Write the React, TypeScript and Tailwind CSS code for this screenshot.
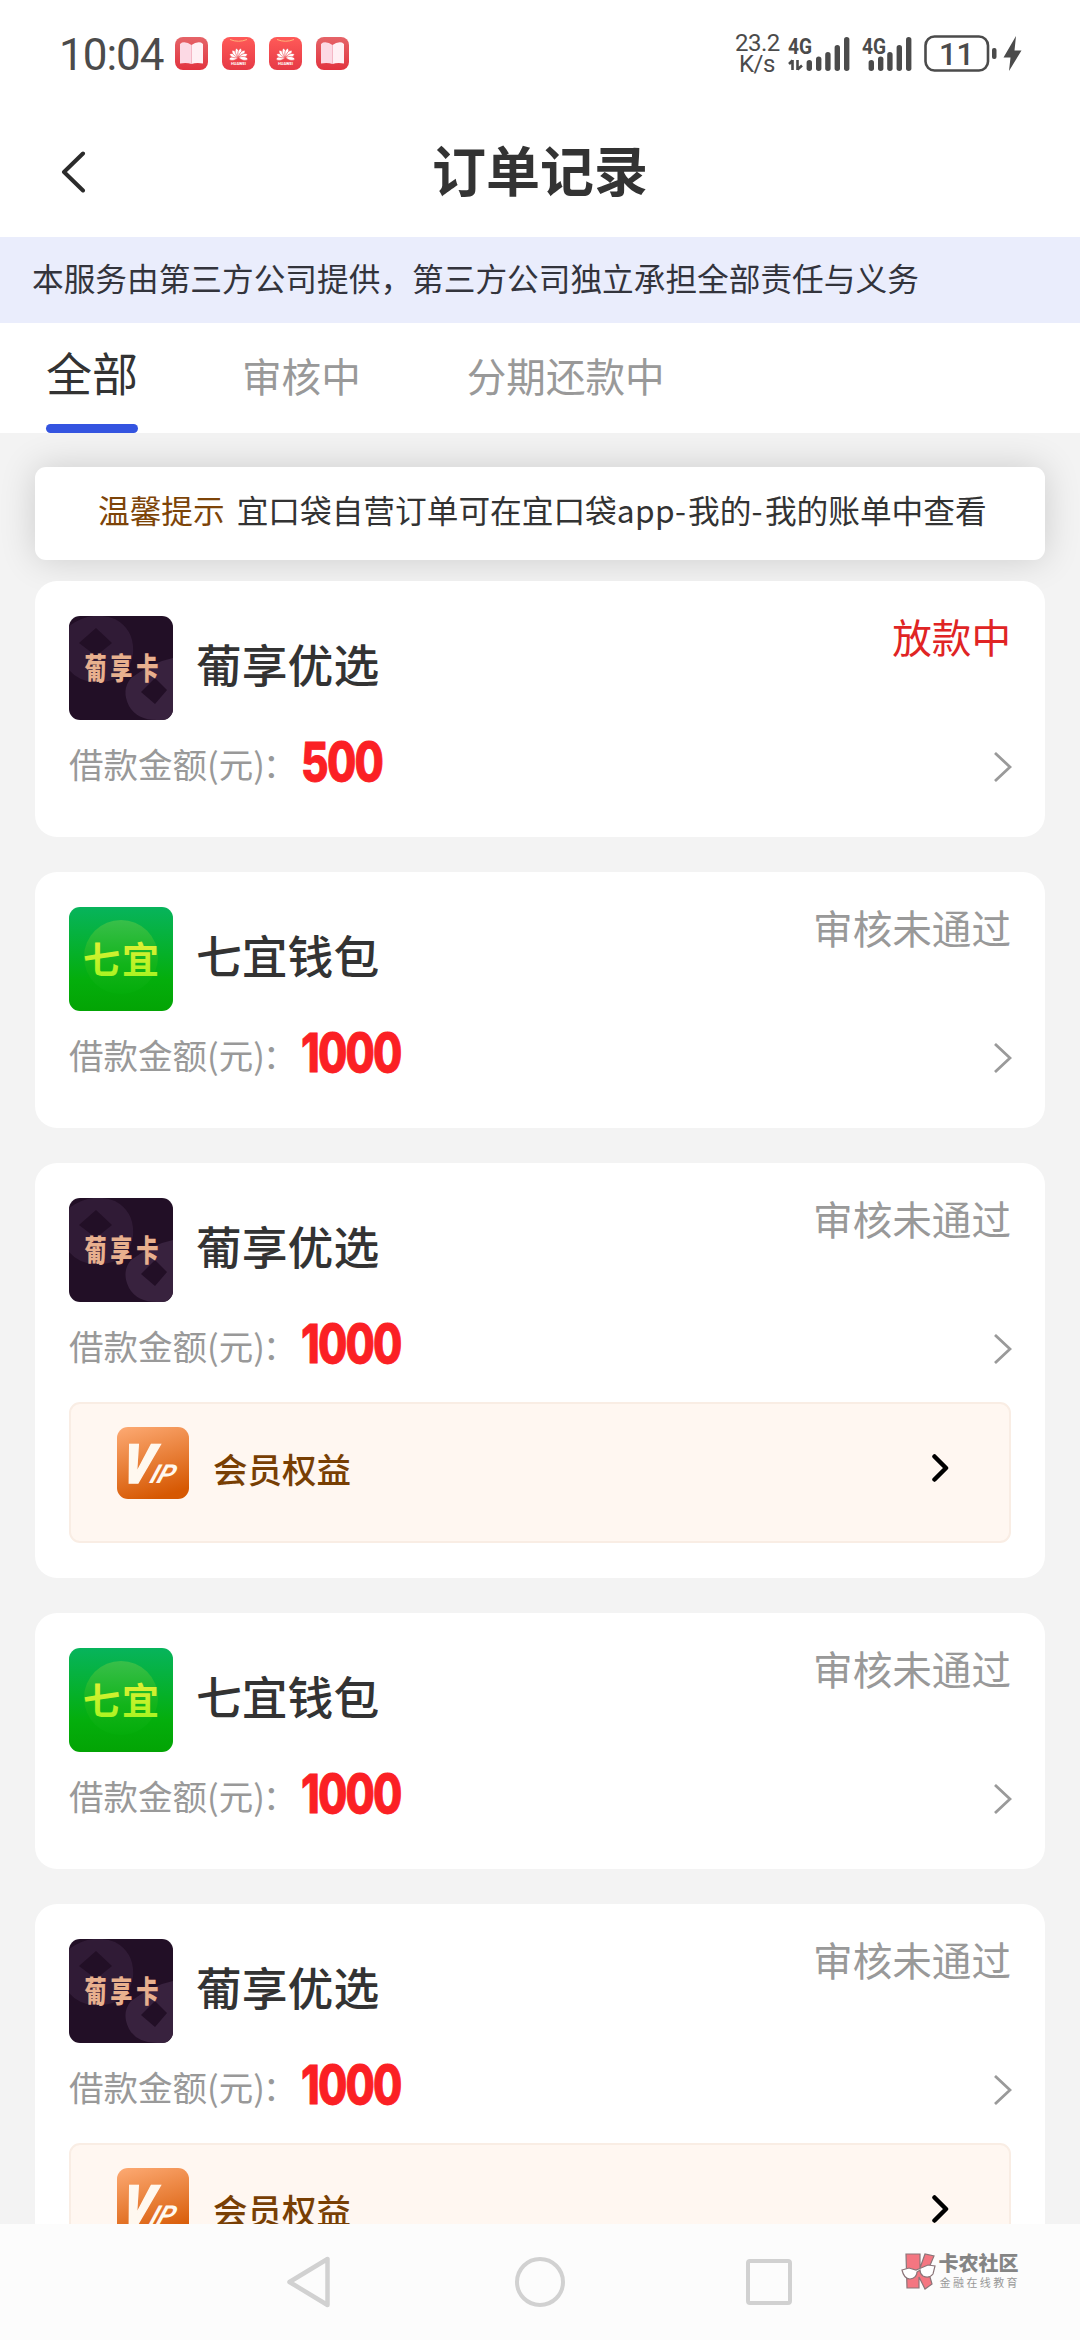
import { clsx } from 'clsx'

type Brand = 'puxiang' | 'qiyi'

interface Order {
  brand: Brand
  name: string
  amount: string
  status: string
  active?: boolean
  vip?: boolean
}

const orders: Order[] = [
  { brand: 'puxiang', name: '葡享优选', amount: '500', status: '放款中', active: true },
  { brand: 'qiyi', name: '七宜钱包', amount: '1000', status: '审核未通过' },
  { brand: 'puxiang', name: '葡享优选', amount: '1000', status: '审核未通过', vip: true },
  { brand: 'qiyi', name: '七宜钱包', amount: '1000', status: '审核未通过' },
  { brand: 'puxiang', name: '葡享优选', amount: '1000', status: '审核未通过', vip: true },
]

function BookIcon() {
  return (
    <svg width="33" height="33" viewBox="0 0 33 33">
      <defs>
        <linearGradient id="book" x1="0" y1="0" x2="0" y2="1">
          <stop offset="0" stopColor="#e56468" />
          <stop offset="1" stopColor="#e2333f" />
        </linearGradient>
      </defs>
      <rect width="33" height="33" rx="8" fill="url(#book)" />
      <path d="M5 7 L7 5.5 Q12 4.5 16.5 8 L16.5 27 Q12 25.5 5 26.5Z" fill="#fcd9e4" />
      <path d="M28 7 L26 5.5 Q21 4.5 16.5 8 L16.5 27 Q21 25.5 28 26.5Z" fill="#fff0f4" />
      <path d="M16.5 8 V27" stroke="#f3b5c4" strokeWidth="0.8" />
    </svg>
  )
}

function HuaweiIcon() {
  return (
    <svg width="33" height="33" viewBox="0 0 33 33">
      <defs>
        <linearGradient id="hw" x1="0" y1="0" x2="0" y2="1">
          <stop offset="0" stopColor="#ff5a58" />
          <stop offset="1" stopColor="#e63a46" />
        </linearGradient>
      </defs>
      <rect width="33" height="33" rx="8" fill="url(#hw)" />
      <path d="M8 2.5 Q16.5 6 25 2.5" fill="none" stroke="#ffb27a" strokeWidth="1" />
      {[-100, -70, -42, -14, 14, 42, 70, 100].map((deg) => (
        <path
          key={deg}
          d="M16.5 20.5 C13.6 16 13.8 11.5 16.5 9.6 C19.2 11.5 19.4 16 16.5 20.5Z"
          fill="#fff"
          stroke="#ee4a50"
          strokeWidth="0.7"
          transform={`rotate(${deg} 16.5 20.5) translate(16.5 20.5) scale(0.88) translate(-16.5 -20.5)`}
        />
      ))}
      <text x="16.5" y="28.4" textAnchor="middle" fontSize="4" fontWeight="700" fill="#fff" fontFamily="Roboto, sans-serif">
        HUAWEI
      </text>
    </svg>
  )
}

function Signal({ data }: { data?: boolean }) {
  return (
    <svg className="overflow-visible" width={data ? 62 : 50} height="36" viewBox={data ? '0 0 62 36' : '12 0 50 36'} fill="#4b4b4b">
      <text x={data ? 0 : 12} y="17.5" fontSize="22" fontWeight="700" textLength="24" lengthAdjust="spacingAndGlyphs" fontFamily="Roboto, sans-serif">
        4G
      </text>
      {data && <path d="M4.5 24 V34 M1 28 L4.5 24.5 M9.5 24 V34 M9.5 33.5 L14 29.5" stroke="#4b4b4b" strokeWidth="2.6" fill="none" />}
      <rect x="18.6" y="24" width="5.4" height="11" rx="2.7" />
      <rect x="28" y="20.5" width="5.4" height="14.5" rx="2.7" />
      <rect x="37.2" y="16" width="5.4" height="19" rx="2.7" />
      <rect x="46.6" y="9" width="5.4" height="26" rx="2.7" />
      <rect x="56" y="1" width="5.4" height="34" rx="2.7" />
    </svg>
  )
}

function StatusBar() {
  return (
    <div className="flex h-[107px] items-center justify-between pr-[56px] pl-[59px] font-[Roboto,sans-serif] text-[#4b4b4b]">
      <div className="flex items-center">
        <span className="w-[116px] pt-[2px] text-[44px] leading-[52px] tracking-[-1px]">10:04</span>
        <div className="flex gap-[14px]">
          <BookIcon />
          <HuaweiIcon />
          <HuaweiIcon />
          <BookIcon />
        </div>
      </div>
      <div className="flex items-center">
        <div className="mt-[1px] w-[44px] text-center text-[24px] leading-[21px] tracking-[-0.5px]">
          <div>23.2</div>
          <div>K/s</div>
        </div>
        <div className="ml-[9px] flex gap-3">
          <Signal data />
          <Signal />
        </div>
        <svg className="ml-3" width="100" height="38" viewBox="0 0 100 38">
          <rect x="1.5" y="1.5" width="62.5" height="34" rx="9" fill="none" stroke="#4b4b4b" strokeWidth="2.6" />
          <rect x="68" y="13" width="4.5" height="11" rx="2" fill="#4b4b4b" />
          <path d="M92 1 L79.5 22.5 H86.5 L85 36 L97.5 15.5 H90.5Z" fill="#4b4b4b" />
          <text x="32.5" y="29.5" textAnchor="middle" fontSize="31" fontWeight="500" fill="#4b4b4b" fontFamily="Roboto, sans-serif">
            11
          </text>
        </svg>
      </div>
    </div>
  )
}

function PuxiangLogo() {
  return (
    <svg width="104" height="104" viewBox="0 0 104 104" className="rounded-[11px]">
      <rect width="104" height="104" fill="#220f26" />
      <path d="M0 10 Q22 -6 46 3 Q66 14 64 38 Q60 64 32 66 Q12 68 0 54Z M27 12 L10 27 L27 40 L43 27Z" fill="#301b36" fillRule="evenodd" />
      <path d="M104 42 Q84 46 62 62 Q52 74 60 90 Q68 104 88 104 H104Z M86 62 L98 74 L86 88 L72 76Z" fill="#38223e" fillRule="evenodd" />
      <g transform="translate(52 62.5) scale(0.74 1)">
        <text x="3" y="0" textAnchor="middle" fontSize="30" fontWeight="900" letterSpacing="5" fill="#e8b08e" fontFamily="'Noto Sans CJK SC', sans-serif">
          葡享卡
        </text>
      </g>
    </svg>
  )
}

function QiyiLogo() {
  return (
    <svg width="104" height="104" viewBox="0 0 104 104" className="rounded-[11px]">
      <defs>
        <linearGradient id="qyBg" x1="0" y1="0" x2="0" y2="1">
          <stop offset="0" stopColor="#07b45c" />
          <stop offset="0.7" stopColor="#04ae0c" />
          <stop offset="1" stopColor="#03a404" />
        </linearGradient>
        <linearGradient id="qyDisc" x1="0" y1="0" x2="0" y2="1">
          <stop offset="0" stopColor="#38bf4a" />
          <stop offset="0.6" stopColor="#12b41a" />
          <stop offset="1" stopColor="#04ac0a" />
        </linearGradient>
        <linearGradient id="qyText" x1="0" y1="0" x2="0" y2="1">
          <stop offset="0" stopColor="#f1ee3a" />
          <stop offset="1" stopColor="#9df51d" />
        </linearGradient>
      </defs>
      <rect width="104" height="104" fill="url(#qyBg)" />
      <circle cx="52" cy="50" r="37" fill="url(#qyDisc)" />
      <text x="53" y="66.5" textAnchor="middle" fontSize="37" fontWeight="700" letterSpacing="2" fill="url(#qyText)" fontFamily="'Noto Sans CJK SC', sans-serif">
        七宜
      </text>
    </svg>
  )
}

function VipIcon() {
  return (
    <svg width="72" height="72" viewBox="0 0 72 72">
      <defs>
        <linearGradient id="vip" x1="0.2" y1="0" x2="0.5" y2="1">
          <stop offset="0" stopColor="#fba66e" />
          <stop offset="1" stopColor="#d65802" />
        </linearGradient>
      </defs>
      <rect width="72" height="72" rx="11" fill="url(#vip)" />
      <g fill="#fff8ef" fontFamily="Roboto, sans-serif" fontWeight="900" fontStyle="italic">
        <g transform="translate(3.5 55.5) skewX(-9) scale(0.88 1)">
          <text x="0" y="0" fontSize="54" stroke="#fff8ef" strokeWidth="1.5">V</text>
        </g>
        <g transform="translate(31.5 55.5) skewX(-20)">
          <text x="0" y="0" fontSize="26" fontWeight="700">IP</text>
        </g>
      </g>
    </svg>
  )
}

function VipEntry() {
  return (
    <div className="mt-[25px] flex h-[141px] items-start rounded-[11px] border-2 border-[#f9ede4] bg-[#fff7f1] pt-[23px] pr-[60px] pl-[46px]">
      <VipIcon />
      <span className="mt-[17px] ml-6 text-[34.5px] leading-[48px] font-medium text-[#783f04]">会员权益</span>
      <svg className="mt-[27px] ml-auto" width="17" height="28" viewBox="0 0 17 28" fill="none" stroke="#000" strokeWidth="4.5" strokeLinecap="round" strokeLinejoin="round">
        <path d="M2.5 2.5 L14 14 L2.5 25.5" />
      </svg>
    </div>
  )
}

function OrderCard({ order }: { order: Order }) {
  return (
    <div className={clsx('shrink-0 rounded-[22px] bg-white px-[34px] pt-[35px]', order.vip ? 'pb-[35px]' : 'pb-[42px]')}>
      <div className="flex h-[104px] items-start">
        {order.brand === 'puxiang' ? <PuxiangLogo /> : <QiyiLogo />}
        <span className="ml-[23px] text-[45.8px] leading-[94px] font-medium text-[#333]">{order.name}</span>
        <span className={clsx('ml-auto text-[39.6px] leading-[40px]', order.active ? 'text-[#e02424]' : 'text-[#999]')}>
          {order.status}
        </span>
      </div>
      <div className="mt-[13px] flex h-[62px] items-center">
        <span className="-mt-[2px] w-[232px] text-[34.5px] leading-[50px] whitespace-nowrap text-[#999]">
          借款金额(元)<span className="-ml-[2px]">：</span>
        </span>
        <span className="-mt-[4px] origin-left scale-x-[0.8] font-[Inter,sans-serif] text-[53px] leading-[66px] font-extrabold tracking-[-2.2px] text-[#fb2024] [-webkit-text-stroke:0.8px_#fb2024]">
          {order.amount}
        </span>
        <svg className="mt-[5px] -mr-px ml-auto" width="18" height="30" viewBox="0 0 18 30" fill="none" stroke="#9a9a9a" strokeWidth="2.8">
          <path d="M1 1 L16 15 L1 29" />
        </svg>
      </div>
      {order.vip && <VipEntry />}
    </div>
  )
}

function CommunityLogo() {
  return (
    <div className="flex h-[36px] items-center">
      <svg width="35" height="37" viewBox="0 0 35 37" stroke="#8b7579" strokeWidth="1.2">
        <path d="M5 1 H19 V15 L24 1 L33 3 L27 17 L31 31 L24 36 L18 24 V35 H6Z" fill="#f47681" />
        <path d="M1 17 L8 15 L15 17 L20 15 L27 12 L34 13 L32 21 Q28 26 22 23 Q19 21 19 17 L16 19 Q16 25 9 26 Q3 26 1 17Z" fill="#fff" />
      </svg>
      <div className="ml-[3px] text-[#858585]">
        <div className="text-[20px] leading-[22px] font-black">卡农社区</div>
        <div className="ml-[1px] text-[11px] leading-[17px] tracking-[2.4px] text-[#999]">金融在线教育</div>
      </div>
    </div>
  )
}

function NavBar() {
  return (
    <div className="flex h-[116px] shrink-0 items-center bg-[#fcfcfc] pr-[60px] pl-[286px]">
      <svg width="45" height="52" viewBox="0 0 45 52" fill="none" stroke="#d1d1d1" strokeWidth="4.5" strokeLinejoin="round">
        <path d="M41.5 3 V49 L3.5 26Z" />
      </svg>
      <div className="ml-[184px] size-[50px] rounded-full border-[4.5px] border-[#d1d1d1]" />
      <div className="ml-[181px] size-[46px] rounded-[4px] border-[4.5px] border-[#d1d1d1]" />
      <div className="mb-[22px] ml-auto">
        <CommunityLogo />
      </div>
    </div>
  )
}

export default function App() {
  return (
    <div className="flex h-[2340px] w-[1080px] flex-col overflow-hidden bg-white font-['Noto_Sans_CJK_SC',sans-serif] text-[#333]">
      <StatusBar />

      <header className="flex h-[130px] items-center pl-[61px]">
        <svg className="shrink-0" width="25" height="42" viewBox="0 0 25 42" fill="none" stroke="#2b2b2b" strokeWidth="4" strokeLinecap="round" strokeLinejoin="round">
          <path d="M22 2.5 L3 21 L22 39.5" />
        </svg>
        <h1 className="flex-1 pr-[86px] pb-[6px] text-center text-[54px] leading-[80px] font-bold">订单记录</h1>
      </header>

      <div className="flex h-[86px] items-center bg-[#eaedfc] pb-[4px] pl-8 text-[31.68px] text-[#33343c]">
        本服务由第三方公司提供，第三方公司独立承担全部责任与义务
      </div>

      <nav className="flex h-[110px] shrink-0 items-start pl-[46px] text-[39.6px] text-[#999]">
        <div className="flex h-[110px] w-[92px] flex-col justify-between text-[46px] text-[#333]">
          <span className="leading-[97px]">全部</span>
          <div className="h-[9px] shrink-0 rounded-full bg-[#3454e0]" />
        </div>
        <span className="ml-[104px] leading-[103px]">审核中</span>
        <span className="ml-[106px] leading-[103px]">分期还款中</span>
      </nav>

      <main className="flex min-h-0 flex-1 flex-col overflow-hidden bg-[#f3f3f3] px-[35px] pt-[34px]">
        <div className="flex h-[93px] shrink-0 items-center rounded-[11px] bg-white pb-[7px] pl-[63px] text-[31.68px] whitespace-nowrap shadow-[0_0_36px_rgba(0,0,0,0.16)]">
          <span className="mr-[12px] text-[#7d4408]">温馨提示</span>
          <span>
            宜口袋自营订单可在宜口袋<span className="tracking-[0.4px]">app</span>
            <span className="tracking-[2px]">-</span>我的<span className="tracking-[2.5px]">-</span>我的账单中查看
          </span>
        </div>
        <div className="mt-[21px] flex flex-col gap-[35px]">
          {orders.map((order, i) => (
            <OrderCard key={i} order={order} />
          ))}
        </div>
      </main>

      <NavBar />
    </div>
  )
}
